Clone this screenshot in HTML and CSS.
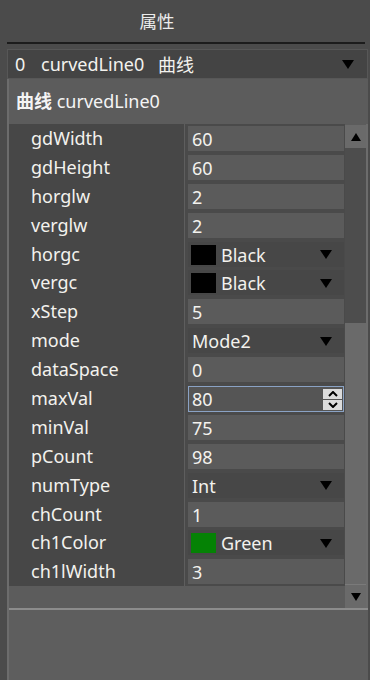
FILE: index.html
```html
<!DOCTYPE html>
<html>
<head>
<meta charset="utf-8">
<link rel="stylesheet" href="styles.css">
</head>
<body>
<div class="title">属性</div>
<div class="rule"></div>
<div class="combo">
  <span class="c-idx">0</span><span class="c-name">curvedLine0</span><span class="c-type">曲线</span>
  <span class="tri"></span>
</div>
<div class="panel">
  <div class="header"><b>曲线</b> curvedLine0</div>
  <div class="gridwrap">
    <div class="rows">
      <div class="row"><div class="name">gdWidth</div><div class="val"><div class="box">60</div></div></div>
      <div class="row"><div class="name">gdHeight</div><div class="val"><div class="box">60</div></div></div>
      <div class="row"><div class="name">horglw</div><div class="val"><div class="box">2</div></div></div>
      <div class="row"><div class="name">verglw</div><div class="val"><div class="box">2</div></div></div>
      <div class="row"><div class="name">horgc</div><div class="val"><div class="box sel"><span class="sw black"></span>Black<span class="tri"></span></div></div></div>
      <div class="row"><div class="name">vergc</div><div class="val"><div class="box sel"><span class="sw black"></span>Black<span class="tri"></span></div></div></div>
      <div class="row"><div class="name">xStep</div><div class="val"><div class="box">5</div></div></div>
      <div class="row"><div class="name">mode</div><div class="val"><div class="box sel">Mode2<span class="tri"></span></div></div></div>
      <div class="row"><div class="name">dataSpace</div><div class="val"><div class="box">0</div></div></div>
      <div class="row"><div class="name">maxVal</div><div class="val"><div class="box focus">80<span class="spin"><span class="sp up"><svg width="10" height="6" viewBox="0 0 10 6"><path d="M1 5 L5 1 L9 5" fill="none" stroke="#000" stroke-width="2"/></svg></span><span class="sp dn"><svg width="10" height="6" viewBox="0 0 10 6"><path d="M1 1 L5 5 L9 1" fill="none" stroke="#000" stroke-width="2"/></svg></span></span></div></div></div>
      <div class="row"><div class="name">minVal</div><div class="val"><div class="box">75</div></div></div>
      <div class="row"><div class="name">pCount</div><div class="val"><div class="box">98</div></div></div>
      <div class="row"><div class="name">numType</div><div class="val"><div class="box sel">Int<span class="tri"></span></div></div></div>
      <div class="row"><div class="name">chCount</div><div class="val"><div class="box">1</div></div></div>
      <div class="row"><div class="name">ch1Color</div><div class="val"><div class="box sel"><span class="sw green"></span>Green<span class="tri"></span></div></div></div>
      <div class="row"><div class="name">ch1lWidth</div><div class="val"><div class="box">3</div></div></div>
      <div class="filler"></div>
    </div>
    <div class="scrollbar">
      <div class="sbtn"><span class="stri up"></span></div>
      <div class="track"></div>
      <div class="thumb"></div>
      <div class="sbtn"><span class="stri dn"></span></div>
    </div>
  </div>
  <div class="bottom"></div>
</div>
</body>
</html>
```
FILE: styles.css
```css
* { box-sizing: border-box; }
html, body { margin: 0; padding: 0; }
body {
  width: 370px;
  height: 680px;
  overflow: hidden;
  background: #4b4b4b;
  color: #f3f2ee;
  font-family: "Noto Sans", "Noto Sans CJK SC", sans-serif;
  font-size: 18px;
}
.title {
  height: 42px;
  line-height: 42px;
  text-align: center;
  padding-right: 56px;
  font-size: 17.5px;
  color: #ececec;
}
.rule {
  height: 2px;
  margin: 0 5px 0 7px;
  background: #1c1c1c;
}
.combo {
  margin: 5px 2px 0 7px;
  height: 30px;
  background: #444444;
  border: 1px solid #575757;
  display: flex;
  align-items: center;
  padding-left: 7px;
  padding-right: 13px;
  font-size: 18px;
}
.c-idx { width: 26px; }
.c-name { width: 117px; }
.c-type { flex: 1; }
.tri {
  width: 0; height: 0;
  border-left: 6px solid transparent;
  border-right: 6px solid transparent;
  border-top: 9px solid #000;
}
.panel {
  margin: 0 2px 0 7px;
  height: 602px;
  background: #5c5c5c;
  border-left: 2px solid #6c6c6c;
  display: flex;
  flex-direction: column;
}
.header {
  height: 45px;
  padding-left: 7px;
  padding-top: 8px;
  font-size: 18px;
  color: #f4f4f4;
}
.header b { font-weight: 700; }
.gridwrap {
  height: 486px;
  display: flex;
  border-bottom: 2px solid #8c8c8c;
}
.rows { flex: 1; display: flex; flex-direction: column; }
.row {
  height: 28.9px;
  display: grid;
  grid-template-columns: 176px 1fr;
  border-bottom: 1px solid #5e5e5e;
}
.name {
  background: #474747;
  padding-left: 22px;
  line-height: 28px;
  border-right: 1px solid #5e5e5e;
}
.val {
  background: #4a4a4a;
  padding: 2px 1px 2px 3px;
}
.box {
  height: 100%;
  background: #5b5b5b;
  display: flex;
  align-items: center;
  padding-left: 4px;
  padding-top: 1px;
}
.box.sel {
  background: #474747;
  padding-right: 12px;
}
.box.sel .tri { margin-left: auto; }
.sw {
  width: 25px;
  height: 20px;
  margin-right: 5px;
  margin-left: -1px;
}
.sw.black { background: #000; }
.sw.green { background: #058205; }
.box.focus {
  border: 1px solid #8aa2c4;
  background: #555555;
  padding-left: 3px;
  padding-right: 1px;
  padding-top: 0;
}
.spin {
  margin-left: auto;
  width: 19px;
  height: 21px;
  display: flex;
  flex-direction: column;
  gap: 1px;
}
.sp {
  flex: 1;
  background: #dcdcdc;
  display: flex;
  align-items: center;
  justify-content: center;
}
.filler { flex: 1; }
.scrollbar {
  width: 23px;
  display: flex;
  flex-direction: column;
  border-right: 2px solid #6c6c6c;
}
.sbtn {
  height: 23px;
  background: #6a6a6a;
  display: flex;
  align-items: center;
  justify-content: center;
}
.scrollbar .sbtn:first-child { margin-top: 1px; }
.stri { width: 0; height: 0; border-left: 5px solid transparent; border-right: 5px solid transparent; }
.stri.up { border-bottom: 8px solid #000; }
.stri.dn { border-top: 8px solid #000; }
.track { height: 175px; background: #4d4d4d; }
.thumb { flex: 1; background: #6a6a6a; border-bottom: 1px solid #7a7a7a; }
.bottom { flex: 1; background: #5e5e5e; }
```
